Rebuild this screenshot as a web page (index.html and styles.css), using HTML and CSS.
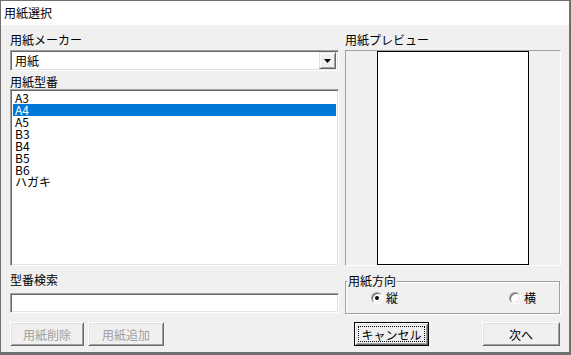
FILE: index.html
```html
<!DOCTYPE html>
<html lang="ja">
<head>
<meta charset="utf-8">
<title>用紙選択</title>
<link rel="stylesheet" href="styles.css">
</head>
<body>
<div class="window">
  <div class="titlebar">用紙選択</div>
  <div class="content">
    <div class="col">
      <div class="label">用紙メーカー</div>
      <div class="combo sunken">
        <span class="combo-text">用紙</span>
        <span class="combo-btn"><svg width="7" height="4" viewBox="0 0 7 4"><polygon points="0,0 7,0 3.5,4" fill="#000"/></svg></span>
      </div>
      <div class="label gap-list">用紙型番</div>
      <ul class="list sunken">
        <li>A3</li>
        <li class="selected">A4</li>
        <li>A5</li>
        <li>B3</li>
        <li>B4</li>
        <li>B5</li>
        <li>B6</li>
        <li>ハガキ</li>
      </ul>
      <div class="label gap-search">型番検索</div>
      <div class="edit sunken"></div>
      <div class="btnrow left-btns">
        <button class="btn w74" disabled>用紙削除</button>
        <button class="btn w76" disabled>用紙追加</button>
      </div>
    </div>
    <div class="col">
      <div class="label">用紙プレビュー</div>
      <div class="preview"><div class="paper"></div></div>
      <div class="group">
        <span class="caption">用紙方向</span>
        <label class="radio-item"><span class="radio checked"></span>縦</label>
        <label class="radio-item"><span class="radio"></span>横</label>
      </div>
      <div class="btnrow right-btns">
        <button class="btn default w75"><span class="focus">キャンセル</span></button>
        <button class="btn w78">次へ</button>
      </div>
    </div>
  </div>
</div>
</body>
</html>
```

FILE: styles.css
```css
* { box-sizing: border-box; }
html, body { margin: 0; padding: 0; }
body {
  background: #707070;
  font-family: "Noto Sans CJK JP", "Noto Sans", sans-serif;
  font-size: 12px;
  color: #000;
  width: 571px;
  height: 355px;
  overflow: hidden;
}
.window {
  margin: 1px 0 0 1px;
  width: 568px;
  height: 351px;
  background: #f0f0f0;
  display: flex;
  flex-direction: column;
}
.titlebar {
  height: 24px;
  line-height: 24px;
  background: #fff;
  padding-left: 3px;
}
.content {
  display: grid;
  grid-template-columns: 329px 216px;
  column-gap: 6px;
  padding: 8px 0 0 9px;
}
.col {
  display: flex;
  flex-direction: column;
}
.label {
  height: 14px;
  line-height: 14px;
  white-space: nowrap;
}
.sunken {
  border: 1px solid;
  border-color: #a0a0a0 #fff #fff #a0a0a0;
  box-shadow: inset 1px 1px #696969, inset -1px -1px #e3e3e3;
  background: #fff;
}
.combo {
  margin-top: 3px;
  height: 21px;
  display: flex;
  align-items: center;
  padding: 2px;
}
.combo-text {
  flex: 1;
  padding-left: 2px;
  line-height: 17px;
}
.combo-btn {
  width: 17px;
  height: 17px;
  background: #f0f0f0;
  border: 1px solid;
  border-color: #e3e3e3 #696969 #696969 #e3e3e3;
  box-shadow: inset 1px 1px #fff, inset -1px -1px #a0a0a0;
  display: flex;
  align-items: center;
  justify-content: center;
}
.gap-list { margin-top: 4px; }
.list {
  list-style: none;
  margin: 0;
  height: 177px;
  padding: 2px 2px 0 2px;
}
.list li {
  height: 12px;
  line-height: 12px;
  padding-left: 2px;
}
.list li.selected {
  background: #0078d7;
  color: #fff;
}
.gap-search { margin-top: 7px; }
.edit {
  margin-top: 6px;
  height: 20px;
}
.btnrow {
  display: flex;
  height: 24px;
}
.left-btns {
  margin-top: 9px;
  gap: 4px;
}
.right-btns {
  margin-top: 8px;
  padding: 0 1px 0 9px;
  justify-content: space-between;
}
.btn {
  height: 24px;
  padding: 0;
  font: inherit;
  color: #000;
  background: #f0f0f0;
  border: 1px solid;
  border-color: #fff #696969 #696969 #fff;
  box-shadow: inset 1px 1px #e3e3e3, inset -1px -1px #a0a0a0;
  display: flex;
  align-items: center;
  justify-content: center;
}
.btn:disabled { color: #a0a0a0; }
.w74 { width: 74px; }
.w75 { width: 75px; }
.w76 { width: 76px; }
.w78 { width: 78px; }
.btn.default {
  border: 1px solid #000;
  box-shadow: inset 1px 1px #fff, inset -1px -1px #696969, inset 2px 2px #e3e3e3, inset -2px -2px #a0a0a0;
  padding: 3px;
}
.focus {
  flex: 1;
  align-self: stretch;
  display: flex;
  align-items: center;
  justify-content: center;
  border: 1px dotted #000;
}
.preview {
  margin-top: 3px;
  height: 216px;
  border: 1px solid;
  border-color: #a0a0a0 #fff #fff #a0a0a0;
  display: flex;
  justify-content: center;
}
.paper {
  width: 152px;
  height: 100%;
  background: #fff;
  border: 1px solid #000;
}
.group {
  position: relative;
  margin: 15px 1px 0 0;
  height: 33px;
  border: 1px solid #a0a0a0;
  box-shadow: inset 1px 1px #fff, 1px 1px #fff;
  display: flex;
  align-items: center;
  justify-content: space-between;
  padding: 0 23px 0 25px;
}
.caption {
  position: absolute;
  top: -8px;
  left: 1px;
  height: 14px;
  line-height: 14px;
  padding: 0 1px;
  background: #f0f0f0;
}
.radio-item {
  display: flex;
  align-items: center;
  gap: 3px;
  line-height: 14px;
}
.radio {
  width: 12px;
  height: 12px;
  border-radius: 50%;
  background: #fff;
  border: 1px solid;
  border-color: #a0a0a0 #fff #fff #a0a0a0;
  box-shadow: inset 1px 1px #696969, inset -1px -1px #e3e3e3;
  display: flex;
  align-items: center;
  justify-content: center;
}
.radio.checked::after {
  content: "";
  width: 4px;
  height: 4px;
  border-radius: 50%;
  background: #000;
}
```
